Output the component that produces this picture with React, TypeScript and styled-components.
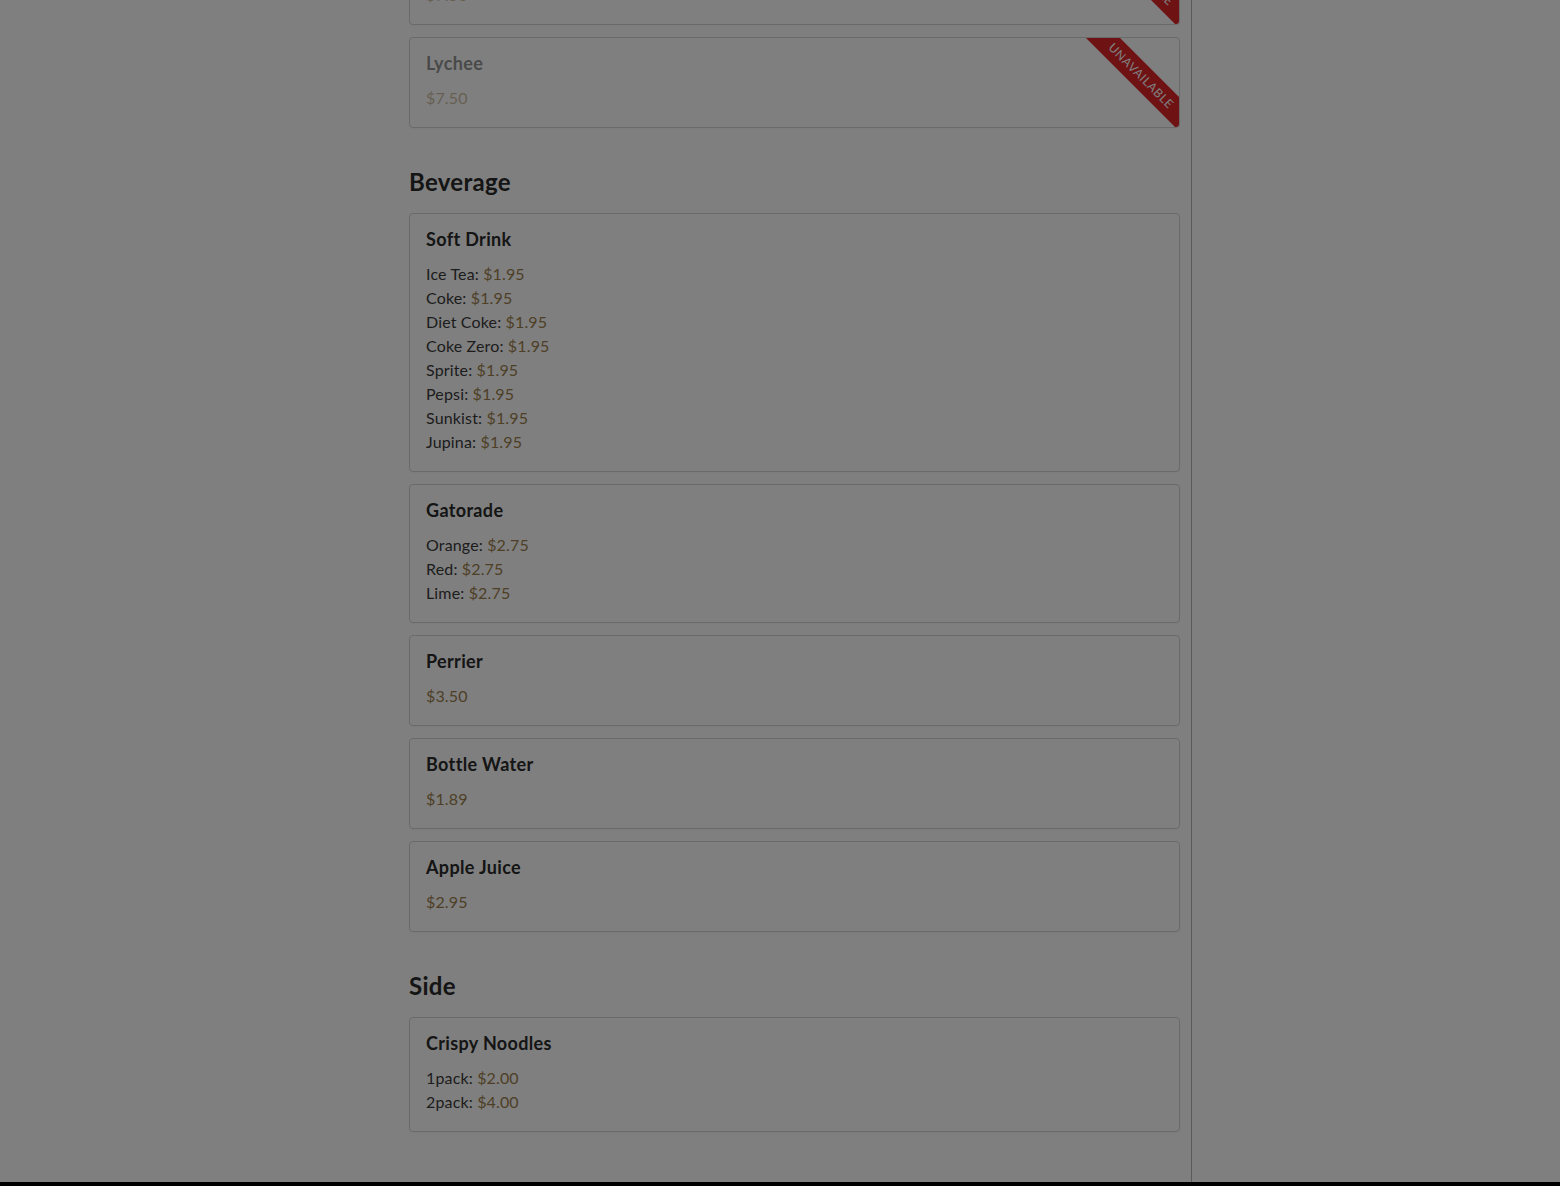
import React from "react";
import styled, { createGlobalStyle } from "styled-components";

const GlobalStyle = createGlobalStyle`
  html, body {
    margin: 0;
    padding: 0;
    background: #ffffff;
    font-family: "Lato", "Noto Sans", sans-serif;
    color: #333;
  }
  * { box-sizing: border-box; }
`;

const Layout = styled.div`
  display: flex;
  min-height: 100vh;
`;

const Main = styled.main`
  width: 1191px;
  padding: 0 11px 60px 409px;
  margin-top: -66px;
`;

const Aside = styled.aside`
  flex: 1;
  border-left: 1px solid #b4b4b4;
`;

const Section = styled.section``;

const SectionTitle = styled.h2`
  margin: 39px 0 17px;
  font-size: 24px;
  line-height: 29px;
  font-weight: 700;
  letter-spacing: 0.3px;
  color: #2a2a2a;
`;

const CardList = styled.div`
  display: flex;
  flex-direction: column;
  gap: 12px;
`;

const Card = styled.div<{ $off?: boolean }>`
  position: relative;
  overflow: hidden;
  border: 1px solid #d5d5d5;
  border-radius: 4px;
  padding: 16px 16px 17px;
  background: #fff;
  box-shadow: 0 1px 2px rgba(0, 0, 0, 0.04);
  & > .body {
    opacity: ${(p) => (p.$off ? 0.5 : 1)};
  }
`;

const CardTitle = styled.h3`
  margin: 0 0 14px;
  font-size: 18px;
  line-height: 18px;
  font-weight: 700;
  letter-spacing: 0.35px;
  color: #2a2a2a;
`;

const Line = styled.div`
  font-size: 16px;
  line-height: 24px;
  letter-spacing: 0.15px;
  color: #3a3a3a;
`;

const Price = styled.span`
  color: #9c7f4c;
`;

const Ribbon = styled.span`
  position: absolute;
  top: 26px;
  right: -42px;
  width: 160px;
  height: 24px;
  line-height: 24px;
  text-align: center;
  background: #dc2428;
  color: #fff;
  font-size: 12px;
  letter-spacing: 0.6px;
  text-transform: uppercase;
  transform: rotate(45deg);
`;

const Overlay = styled.div`
  position: fixed;
  inset: 0;
  background: rgba(0, 0, 0, 0.5);
  z-index: 10;
`;

const BottomBar = styled.div`
  position: fixed;
  left: 0;
  right: 0;
  bottom: 0;
  height: 4px;
  background: #000;
  z-index: 5;
`;

type Item = {
  name: string;
  price?: string;
  options?: [string, string][];
  off?: boolean;
};

const MenuCard = ({ item }: { item: Item }) => (
  <Card $off={item.off}>
    <div className="body">
      <CardTitle>{item.name}</CardTitle>
      {item.options ? (
        item.options.map(([label, p]) => (
          <Line key={label}>
            {label}: <Price>{p}</Price>
          </Line>
        ))
      ) : (
        <Line>
          <Price>{item.price}</Price>
        </Line>
      )}
    </div>
    {item.off && <Ribbon>Unavailable</Ribbon>}
  </Card>
);

const desserts: Item[] = [
  { name: "Mango", price: "$7.50", off: true },
  { name: "Lychee", price: "$7.50", off: true },
];

const beverages: Item[] = [
  {
    name: "Soft Drink",
    options: [
      ["Ice Tea", "$1.95"],
      ["Coke", "$1.95"],
      ["Diet Coke", "$1.95"],
      ["Coke Zero", "$1.95"],
      ["Sprite", "$1.95"],
      ["Pepsi", "$1.95"],
      ["Sunkist", "$1.95"],
      ["Jupina", "$1.95"],
    ],
  },
  {
    name: "Gatorade",
    options: [
      ["Orange", "$2.75"],
      ["Red", "$2.75"],
      ["Lime", "$2.75"],
    ],
  },
  { name: "Perrier", price: "$3.50" },
  { name: "Bottle Water", price: "$1.89" },
  { name: "Apple Juice", price: "$2.95" },
];

const sides: Item[] = [
  {
    name: "Crispy Noodles",
    options: [
      ["1pack", "$2.00"],
      ["2pack", "$4.00"],
    ],
  },
];

export default function App() {
  return (
    <>
      <GlobalStyle />
      <Layout>
        <Main>
          <Section>
            <CardList>
              {desserts.map((it) => (
                <MenuCard key={it.name} item={it} />
              ))}
            </CardList>
          </Section>
          <Section>
            <SectionTitle>Beverage</SectionTitle>
            <CardList>
              {beverages.map((it) => (
                <MenuCard key={it.name} item={it} />
              ))}
            </CardList>
          </Section>
          <Section>
            <SectionTitle>Side</SectionTitle>
            <CardList>
              {sides.map((it) => (
                <MenuCard key={it.name} item={it} />
              ))}
            </CardList>
          </Section>
        </Main>
        <Aside />
      </Layout>
      <BottomBar />
      <Overlay />
    </>
  );
}
